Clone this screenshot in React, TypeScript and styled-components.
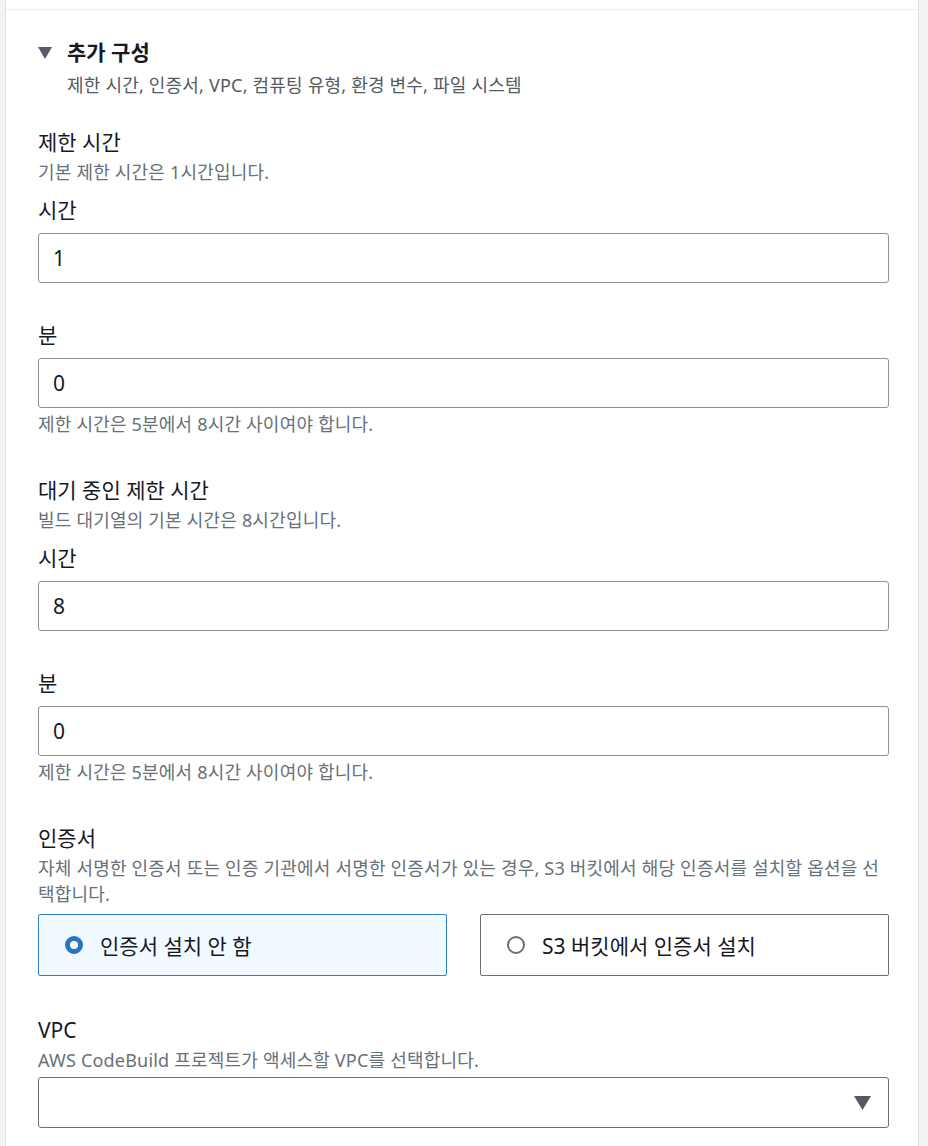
import styled, { createGlobalStyle } from "styled-components";

const GlobalStyle = createGlobalStyle`
  html, body {
    margin: 0;
    padding: 0;
    background: #f2f3f3;
  }
  body {
    font-family: "Noto Sans", "Noto Sans CJK KR", sans-serif;
    color: #16191f;
  }
  * { box-sizing: border-box; }
`;

const Card = styled.div`
  margin-left: 5px;
  width: 914px;
  min-height: 1146px;
  background: #fff;
  border-left: 1px solid #e1e4e5;
  border-right: 1px solid #e1e4e5;
  padding-top: 9px;
`;

const Section = styled.section`
  border-top: 1px solid #eaeded;
  padding: 28px 29px 0 32px;
`;

const Expander = styled.div`
  display: flex;
  align-items: flex-start;
  gap: 15px;
`;

const Caret = styled.svg`
  width: 14px;
  height: 12px;
  margin-top: 9px;
  fill: #545b64;
  flex-shrink: 0;
`;

const ExpanderText = styled.div`
  display: flex;
  flex-direction: column;
`;

const ExpanderTitle = styled.h2`
  margin: 0;
  font-size: 21px;
  line-height: 28px;
  font-weight: 700;
  color: #16191f;
`;

const ExpanderSub = styled.div`
  margin-top: 6px;
  font-size: 18px;
  line-height: 26px;
  letter-spacing: 0.2px;
  color: #545b64;
`;

const Body = styled.div`
  display: flex;
  flex-direction: column;
  padding-top: 30px;
`;

const Group = styled.div<{ $gap?: number }>`
  display: flex;
  flex-direction: column;
  margin-bottom: ${(p) => p.$gap ?? 39}px;
`;

const Label = styled.div`
  font-size: 21px;
  line-height: 28px;
  color: #16191f;
`;

const Desc = styled.div`
  margin-top: 3px;
  font-size: 18px;
  line-height: 26px;
  letter-spacing: 0.2px;
  color: #687078;
`;

const Field = styled.div<{ $first?: boolean }>`
  display: flex;
  flex-direction: column;
  margin-top: ${(p) => (p.$first ? 11 : 38)}px;
`;

const SubLabel = styled.div`
  font-size: 21px;
  line-height: 28px;
  color: #16191f;
  margin-bottom: 9px;
`;

const Input = styled.input`
  width: 100%;
  height: 50px;
  border: 1px solid #879596;
  border-radius: 3px;
  padding: 0 14px;
  font-family: "Noto Sans", "Noto Sans CJK KR", sans-serif;
  font-size: 21px;
  color: #16191f;
  background: #fff;
  outline: none;
`;

const Hint = styled.div`
  margin-top: 3px;
  font-size: 18px;
  line-height: 26px;
  letter-spacing: 0.2px;
  color: #687078;
`;

const TileRow = styled.div`
  display: grid;
  grid-template-columns: 1fr 1fr;
  gap: 33px;
  margin-top: 7px;
`;

const Tile = styled.label<{ $checked?: boolean }>`
  display: flex;
  align-items: center;
  gap: 17px;
  height: 62px;
  padding: 0 26px;
  border: 1px solid ${(p) => (p.$checked ? "#2e80c8" : "#687078")};
  border-radius: 2px;
  background: ${(p) => (p.$checked ? "#f1faff" : "#fff")};
  font-size: 21px;
  color: #16191f;
  cursor: pointer;
`;

const Radio = styled.span<{ $checked?: boolean }>`
  width: 18px;
  height: 18px;
  border-radius: 50%;
  flex-shrink: 0;
  border: ${(p) => (p.$checked ? "5px solid #2a73bf" : "2px solid #687078")};
  background: #fff;
`;

const Select = styled.div`
  display: flex;
  align-items: center;
  justify-content: flex-end;
  height: 51px;
  border: 1px solid #687078;
  border-radius: 3px;
  padding: 0 17px;
  margin-top: 4px;
  background: #fff;
`;

const SelectCaret = styled.svg`
  width: 17px;
  height: 14px;
  fill: #545b64;
`;

type Choice = { label: string; checked?: boolean };

const certChoices: Choice[] = [
  { label: "인증서 설치 안 함", checked: true },
  { label: "S3 버킷에서 인증서 설치" },
];

function TimeFields({ hours, hint }: { hours: string; hint: string }) {
  return (
    <>
      <Field $first>
        <SubLabel>시간</SubLabel>
        <Input defaultValue={hours} />
      </Field>
      <Field>
        <SubLabel>분</SubLabel>
        <Input defaultValue="0" />
        <Hint>{hint}</Hint>
      </Field>
    </>
  );
}

export default function App() {
  return (
    <>
      <GlobalStyle />
      <Card>
        <Section>
          <Expander>
            <Caret viewBox="0 0 14 12">
              <path d="M0 0 H14 L7 12 Z" />
            </Caret>
            <ExpanderText>
              <ExpanderTitle>추가 구성</ExpanderTitle>
              <ExpanderSub>제한 시간, 인증서, VPC, 컴퓨팅 유형, 환경 변수, 파일 시스템</ExpanderSub>
            </ExpanderText>
          </Expander>

          <Body>
            <Group>
              <Label>제한 시간</Label>
              <Desc>기본 제한 시간은 1시간입니다.</Desc>
              <TimeFields hours="1" hint="제한 시간은 5분에서 8시간 사이여야 합니다." />
            </Group>

            <Group>
              <Label>대기 중인 제한 시간</Label>
              <Desc>빌드 대기열의 기본 시간은 8시간입니다.</Desc>
              <TimeFields hours="8" hint="제한 시간은 5분에서 8시간 사이여야 합니다." />
            </Group>

            <Group $gap={40}>
              <Label>인증서</Label>
              <Desc>
                자체 서명한 인증서 또는 인증 기관에서 서명한 인증서가 있는 경우, S3 버킷에서 해당 인증서를 설치할
                옵션을 선택합니다.
              </Desc>
              <TileRow>
                {certChoices.map((c) => (
                  <Tile key={c.label} $checked={c.checked}>
                    <Radio $checked={c.checked} />
                    {c.label}
                  </Tile>
                ))}
              </TileRow>
            </Group>

            <Group $gap={0}>
              <Label>VPC</Label>
              <Desc>AWS CodeBuild 프로젝트가 액세스할 VPC를 선택합니다.</Desc>
              <Select>
                <SelectCaret viewBox="0 0 17 14">
                  <path d="M0 0 H17 L8.5 14 Z" />
                </SelectCaret>
              </Select>
            </Group>
          </Body>
        </Section>
      </Card>
    </>
  );
}
